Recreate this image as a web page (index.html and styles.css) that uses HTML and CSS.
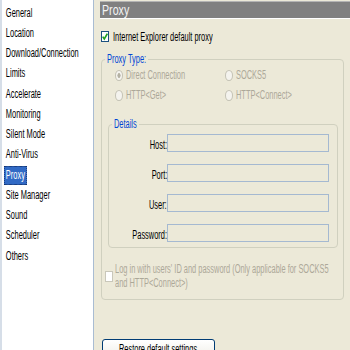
FILE: index.html
```html
<!DOCTYPE html>
<html lang="en">
<head>
    <meta charset="UTF-8">
    <title>Options - Proxy</title>
    <link rel="stylesheet" href="styles.css">
</head>
<body>
    <div class="app">
        <ul class="nav">
            <li><span class="t">General</span></li>
            <li><span class="t">Location</span></li>
            <li><span class="t">Download/Connection</span></li>
            <li><span class="t">Limits</span></li>
            <li><span class="t">Accelerate</span></li>
            <li><span class="t">Monitoring</span></li>
            <li><span class="t">Silent Mode</span></li>
            <li><span class="t">Anti-Virus</span></li>
            <li class="active"><span class="t">Proxy</span></li>
            <li><span class="t">Site Manager</span></li>
            <li><span class="t">Sound</span></li>
            <li><span class="t">Scheduler</span></li>
            <li><span class="t">Others</span></li>
        </ul>

        <div class="page">
            <div class="title"><span class="t">Proxy</span></div>

            <div class="check">
                <span class="box">
                    <svg width="6" height="9" viewBox="0 0 6 9"><polyline points="0.7,4.6 2.3,7 5.4,1.6" fill="none" stroke="#21a121" stroke-width="1.7"/></svg>
                </span>
                <span class="t">Internet Explorer default proxy</span>
            </div>

            <fieldset class="group outer">
                <legend><span class="t cut-type">Proxy Type:</span></legend>
                <div class="radios">
                    <div class="radio"><span class="dot on"></span><span class="t">Direct Connection</span></div>
                    <div class="radio"><span class="dot"></span><span class="t">SOCKS5</span></div>
                    <div class="radio"><span class="dot"></span><span class="t">HTTP&lt;Get&gt;</span></div>
                    <div class="radio"><span class="dot"></span><span class="t">HTTP&lt;Connect&gt;</span></div>
                </div>

                <fieldset class="group details">
                    <legend><span class="t cut-details">Details</span></legend>
                    <div class="field"><span class="lbl"><span class="t">Host:</span></span><span class="input"></span></div>
                    <div class="field"><span class="lbl"><span class="t">Port:</span></span><span class="input"></span></div>
                    <div class="field"><span class="lbl"><span class="t">User:</span></span><span class="input"></span></div>
                    <div class="field"><span class="lbl"><span class="t">Password:</span></span><span class="input"></span></div>
                </fieldset>

                <div class="login">
                    <span class="box off"></span>
                    <div class="login-text">
                        <span class="t">Log in with users' ID and password (Only applicable for SOCKS5</span>
                        <span class="t">and HTTP&lt;Connect&gt;)</span>
                    </div>
                </div>
            </fieldset>

            <button class="restore"><span class="t">Restore default settings</span></button>
        </div>
    </div>
</body>
</html>
```

FILE: styles.css
```css
* {
    box-sizing: border-box;
}

body {
    margin: 0;
    background-color: #ece9d8;
    font-family: "Liberation Sans", Arial, sans-serif;
    font-size: 12px;
    color: #000;
    overflow: hidden;
}

/* text is drawn narrow, like the old dialog */
.t {
    display: inline-block;
    white-space: nowrap;
    transform: scaleX(0.62);
    transform-origin: 0 50%;
}

.app {
    display: flex;
    height: 350px;
    overflow: hidden;
}

.nav {
    list-style: none;
    margin: 0;
    padding: 3px 0 0 2px;
    width: 94px;
    flex: none;
    background-color: #fff;
    border-left: 2px solid #d6dee8;
    border-right: 1px solid #a9bcd2;
}

.nav li {
    height: 20.25px;
    display: flex;
    align-items: center;
}

.nav .t {
    padding: 0 3px;
    line-height: 19px;
}

.nav .active .t {
    background-color: #316ac5;
    color: #fff;
    outline: 1px dotted #0c2558;
    outline-offset: -1px;
}

.page {
    flex: 1;
    min-width: 0;
    padding-left: 6px;
}

.title {
    margin-top: 1px;
    height: 18px;
    padding-left: 2px;
    background-color: #808080;
    border-top: 1px solid #b4b4b4;
    border-bottom: 1px solid #fff;
    color: #f4f4f4;
    font-size: 14px;
    line-height: 16px;
}

.title .t {
    transform: scaleX(0.76);
}

.check {
    display: flex;
    align-items: center;
    height: 13px;
    margin: 11px 0 0 1px;
}

.box {
    display: flex;
    align-items: center;
    justify-content: center;
    flex: none;
    width: 8px;
    height: 11px;
    margin-right: 4px;
    border: 1px solid #1c5180;
    background-color: #fff;
}

.box.off {
    border-color: #c9c7ba;
    margin-right: 2px;
}

.group {
    margin: 0;
    min-width: 0;
    border: 1px solid #d0d0bf;
    border-radius: 4px;
}

.group legend {
    padding: 0 2px;
    margin-left: 3px;
    line-height: 12px;
    color: #0046d5;
}

.cut-type {
    margin-right: -24px;
}

.cut-details {
    margin-right: -14px;
}

.outer {
    margin: 10px 6px 0 1px;
    padding: 3px 0 9px;
}

.radios {
    display: grid;
    grid-template-columns: 110px 1fr;
    row-gap: 6px;
    margin-left: 13px;
}

.radio {
    display: flex;
    align-items: center;
    height: 14px;
    color: #aca899;
}

.dot {
    flex: none;
    width: 8px;
    height: 11px;
    margin-right: 3px;
    border: 1px solid #c4c2b5;
    border-radius: 50%;
    background-color: #f4f3ee;
}

.dot.on {
    background: radial-gradient(ellipse closest-side, #b4b1a3 45%, #f4f3ee 60%);
}

.details {
    margin: 16px 5px 0 6px;
    padding: 4px 8px 5px 0;
}

.field {
    display: flex;
    align-items: flex-end;
    height: 18px;
    line-height: 13px;
}

.field + .field {
    margin-top: 12px;
}

.lbl {
    width: 58px;
    flex: none;
    text-align: right;
}

.lbl .t {
    transform-origin: 100% 50%;
}

.input {
    width: 162px;
    height: 18px;
    border: 1px solid #a5b9d1;
    background-color: #ece9d8;
}

.login {
    display: flex;
    align-items: center;
    margin: 14px 0 0 3px;
    line-height: 14px;
    color: #aca899;
}

.login-text .t {
    display: block;
    width: max-content;
}

.restore {
    display: flex;
    justify-content: center;
    margin: 39px 0 0 2px;
    padding: 0;
    width: 113px;
    height: 23px;
    border: 1px solid #003c74;
    border-radius: 3px;
    background: linear-gradient(#fff, #f0efe8 80%, #d6d0c5);
    font-family: inherit;
    font-size: 12px;
    line-height: 19px;
    color: #000;
}

.restore .t {
    transform-origin: 50% 50%;
}
```
